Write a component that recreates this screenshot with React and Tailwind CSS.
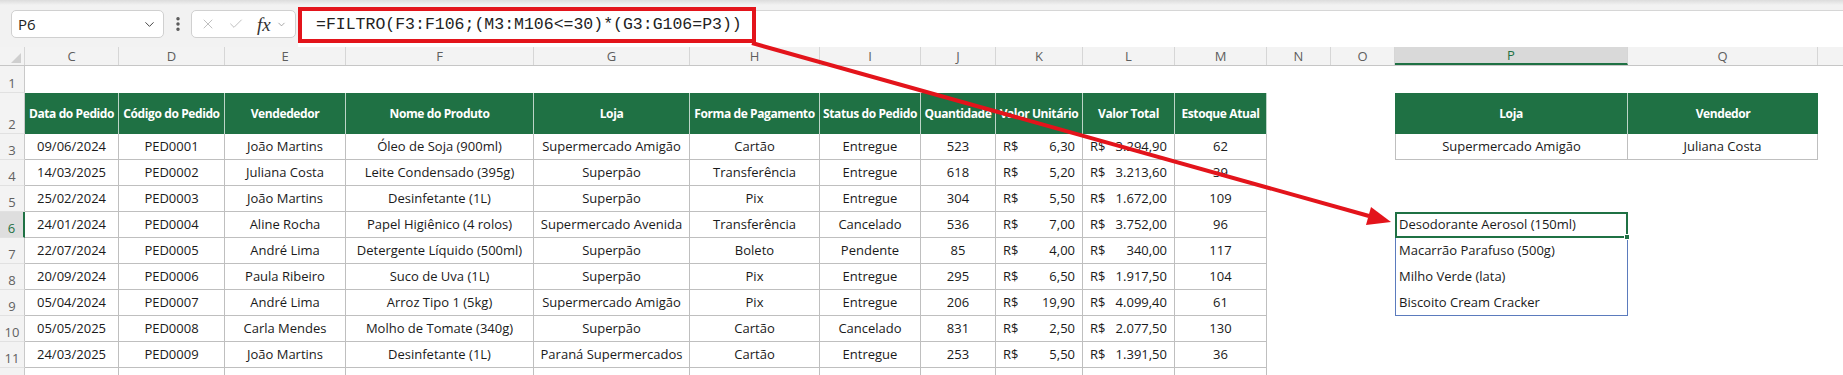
import { ChevronDown, EllipsisVertical, X, Check } from 'lucide-react';

const GRID =
  'grid grid-cols-[25px_94px_106px_121px_188px_156px_130px_101px_75px_87px_92px_92px_64px_64px_233px_190px_1fr]';

const letters = ['C', 'D', 'E', 'F', 'G', 'H', 'I', 'J', 'K', 'L', 'M', 'N', 'O', 'P', 'Q'];

const headers = [
  'Data do Pedido',
  'Código do Pedido',
  'Vendededor',
  'Nome do Produto',
  'Loja',
  'Forma de Pagamento',
  'Status do Pedido',
  'Quantidade',
  'Valor Unitário',
  'Valor Total',
  'Estoque Atual',
];

const orders = [
  ['09/06/2024', 'PED0001', 'João Martins', 'Óleo de Soja (900ml)', 'Supermercado Amigão', 'Cartão', 'Entregue', '523', '6,30', '3.294,90', '62'],
  ['14/03/2025', 'PED0002', 'Juliana Costa', 'Leite Condensado (395g)', 'Superpão', 'Transferência', 'Entregue', '618', '5,20', '3.213,60', '39'],
  ['25/02/2024', 'PED0003', 'João Martins', 'Desinfetante (1L)', 'Superpão', 'Pix', 'Entregue', '304', '5,50', '1.672,00', '109'],
  ['24/01/2024', 'PED0004', 'Aline Rocha', 'Papel Higiênico (4 rolos)', 'Supermercado Avenida', 'Transferência', 'Cancelado', '536', '7,00', '3.752,00', '96'],
  ['22/07/2024', 'PED0005', 'André Lima', 'Detergente Líquido (500ml)', 'Superpão', 'Boleto', 'Pendente', '85', '4,00', '340,00', '117'],
  ['20/09/2024', 'PED0006', 'Paula Ribeiro', 'Suco de Uva (1L)', 'Superpão', 'Pix', 'Entregue', '295', '6,50', '1.917,50', '104'],
  ['05/04/2024', 'PED0007', 'André Lima', 'Arroz Tipo 1 (5kg)', 'Supermercado Amigão', 'Pix', 'Entregue', '206', '19,90', '4.099,40', '61'],
  ['05/05/2025', 'PED0008', 'Carla Mendes', 'Molho de Tomate (340g)', 'Superpão', 'Cartão', 'Cancelado', '831', '2,50', '2.077,50', '130'],
  ['24/03/2025', 'PED0009', 'João Martins', 'Desinfetante (1L)', 'Paraná Supermercados', 'Cartão', 'Entregue', '253', '5,50', '1.391,50', '36'],
];

// spill result of the FILTRO formula, P6:P9
const spill = ['Desodorante Aerosol (150ml)', 'Macarrão Parafuso (500g)', 'Milho Verde (lata)', 'Biscoito Cream Cracker'];

function RowHead({ n, active }) {
  return (
    <div
      className={`flex items-end justify-center pb-[2px] text-[13px] leading-none ${
        active
          ? 'border-r-2 border-[#1f7144] bg-[#dedede] text-[#1f7144]'
          : 'border-r border-[#c9c9c9] bg-[#f3f3f3] text-[#616161]'
      } border-b border-b-[#e1e1e1]`}
    >
      {n}
    </div>
  );
}

function DataCell({ value, idx }) {
  if (idx === 8 || idx === 9) {
    return (
      <div className="flex items-center justify-between border-r border-b border-[#bfbfbf] px-[7px] text-[13px]">
        <span>R$</span>
        <span>{value}</span>
      </div>
    );
  }
  return (
    <div className="flex items-center justify-center whitespace-nowrap border-r border-b border-[#bfbfbf] text-[13px]">
      {value}
    </div>
  );
}

function HeadCell({ children, last }) {
  return (
    <div
      className={`flex items-center justify-center whitespace-nowrap bg-[#1f7144] text-[12px] font-bold tracking-[-0.4px] text-white ${
        last ? '' : 'border-r border-white/70'
      }`}
    >
      {children}
    </div>
  );
}

function P6Cell() {
  return (
    <div className="relative flex items-center border-2 border-[#1f7144] pl-[2px] text-[13px] whitespace-nowrap">
      {spill[0]}
      <span className="absolute -bottom-[4px] -right-[4px] h-[6px] w-[6px] border border-white bg-[#1f7144]"></span>
    </div>
  );
}

function Empty() {
  return <div></div>;
}

export default function App() {
  return (
    <div className="relative h-[375px] w-[1843px] overflow-hidden bg-white font-['Open_Sans',sans-serif] text-[#1a1a1a]">
      <div className="h-[5px] bg-gradient-to-b from-[#dcdcdc] to-[#f2f2f2]" />

      {/* formula bar */}
      <div className="flex h-[42px] bg-[#f2f2f2]">
        <div className="ml-[11px] mt-[5px] flex h-[28px] w-[153px] items-center justify-between rounded-[5px] border border-[#d0d0d0] bg-white pl-[6px] pr-[6px]">
          <span className="text-[15px] text-[#222]">P6</span>
          <ChevronDown size={15} strokeWidth={1.6} className="text-[#444]" />
        </div>
        <div className="mt-[5px] flex h-[28px] w-[27px] items-center justify-center">
          <EllipsisVertical size={18} strokeWidth={2.6} className="text-[#555]" />
        </div>
        <div className="mt-[5px] flex h-[28px] w-[105px] items-center rounded-[5px] border border-[#d0d0d0] bg-white pl-[8px]">
          <X size={16} strokeWidth={1.3} className="text-[#b5b5b5]" />
          <Check size={16} strokeWidth={1.3} className="ml-[12px] text-[#b5b5b5]" />
          <span className="ml-[13px] font-['Liberation_Serif',serif] text-[19px] italic leading-none text-[#333]">fx</span>
          <ChevronDown size={11} strokeWidth={1.6} className="ml-[5px] text-[#888]" />
        </div>
        <div className="ml-[2px] mt-[5px] h-[37px] flex-1 border-t border-[#d6d6d6] bg-white">
          <div className="-mt-[4px] flex h-[36px] w-[458px] items-center border-[4px] border-[#e3141b] pl-[14px] font-['Liberation_Mono',monospace] text-[16.5px] text-[#222]">
            =FILTRO(F3:F106;(M3:M106&lt;=30)*(G3:G106=P3))
          </div>
        </div>
      </div>

      {/* column headers */}
      <div className={`${GRID} h-[19px] border-b border-[#c6c6c6] bg-[#f3f3f3] text-[13px] leading-none text-[#5e5e5e]`}>
        <div className="relative border-r border-[#d6d6d6]">
          <span className="absolute bottom-[2px] right-[3px] h-0 w-0 border-b-[10px] border-l-[10px] border-b-[#cfcfcf] border-l-transparent"></span>
        </div>
        {letters.map((l) =>
          l === 'P' ? (
            <div key={l} className="flex items-center justify-center border-b-2 border-r border-[#1f7144] border-r-[#d6d6d6] bg-[#d9d9d9] text-[#1f7144]">
              {l}
            </div>
          ) : (
            <div key={l} className="flex items-center justify-center border-r border-[#d6d6d6]">
              {l}
            </div>
          )
        )}
        <div></div>
      </div>

      {/* row 1 */}
      <div className={`${GRID} h-[27px]`}>
        <RowHead n={1} />
      </div>

      {/* row 2: headers */}
      <div className={`${GRID} h-[41px]`}>
        <RowHead n={2} />
        {headers.map((h) => (
          <HeadCell key={h}>{h}</HeadCell>
        ))}
        <Empty />
        <Empty />
        <HeadCell>Loja</HeadCell>
        <HeadCell last>Vendedor</HeadCell>
      </div>

      {/* data rows */}
      {orders.map((row, i) => {
        const n = i + 3;
        return (
          <div key={n} className={`${GRID} h-[26px]`}>
            <RowHead n={n} active={n === 6} />
            {row.map((v, idx) => (
              <DataCell key={idx} value={v} idx={idx} />
            ))}
            <Empty />
            <Empty />
            {n === 3 && (
              <>
                <div className="flex items-center justify-center border-x border-b border-[#bfbfbf] text-[13px]">Supermercado Amigão</div>
                <div className="flex items-center justify-center border-r border-b border-[#bfbfbf] text-[13px]">Juliana Costa</div>
              </>
            )}
            {n === 6 && (
              <>
                <P6Cell />
                <Empty />
              </>
            )}
            {n >= 7 && n <= 9 && (
              <>
                <div className={`flex items-center border-x border-[#5b7bbd] pl-[3px] text-[13px] whitespace-nowrap ${n === 9 ? 'border-b' : ''}`}>
                  {spill[n - 6]}
                </div>
                <Empty />
              </>
            )}
          </div>
        );
      })}

      {/* row 12, only its top edge shows */}
      <div className={`${GRID} h-[26px]`}>
        <div className="border-r border-[#c9c9c9] bg-[#f3f3f3]"></div>
        {headers.map((h) => (
          <div key={h} className="border-r border-b border-[#bfbfbf]"></div>
        ))}
      </div>

      {/* red arrow from formula to result */}
      <svg className="pointer-events-none absolute left-0 top-0" width="1843" height="375">
        <line x1="752" y1="43" x2="1369" y2="216" stroke="#e3141b" strokeWidth="4" />
        <polygon points="1391,222 1366,225 1371,207" fill="#e3141b" />
      </svg>
    </div>
  );
}
